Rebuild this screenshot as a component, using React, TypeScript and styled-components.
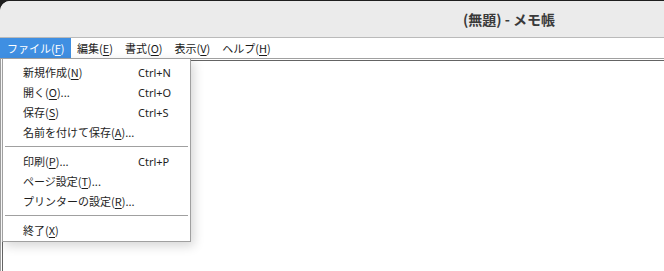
import React from "react";
import styled, { createGlobalStyle } from "styled-components";

const Global = createGlobalStyle`
  html, body { margin: 0; padding: 0; background: #1e1e1e; }
  body { width: 664px; height: 271px; overflow: hidden; font-family: "Noto Sans CJK JP", "Noto Sans", sans-serif; }
  #root { height: 100%; }
`;

const Window = styled.div`
  margin-top: 1px;
  height: 270px;
  background: #ffffff;
  border-top-left-radius: 10px;
  display: flex;
  flex-direction: column;
  overflow: hidden;
  position: relative;
`;

const TitleBar = styled.div`
  height: 36px;
  flex: none;
  background: #ebebeb;
  border-bottom: 1px solid #bababa;
  display: flex;
  align-items: center;
  padding-left: 463px;
  font-size: 14px;
  font-weight: 700;
  color: #3a3a3a;
  white-space: nowrap;
`;

const MenuBar = styled.div`
  height: 20px;
  flex: none;
  display: flex;
  background: #ffffff;
`;

const MenuTitle = styled.div<{ $active?: boolean }>`
  height: 20px;
  padding: 0 6px;
  display: flex;
  align-items: center;
  font-size: 11px;
  color: ${(p) => (p.$active ? "#ffffff" : "#1a1a1a")};
  background: ${(p) => (p.$active ? "#3f8fe2" : "transparent")};
  white-space: nowrap;
  &:first-child {
    padding: 0 6.5px 0 7px;
  }
`;

const Key = styled.span`
  text-decoration: underline;
  text-underline-offset: 2px;
`;

const EditArea = styled.div`
  flex: 1;
  border-top: 1px solid #a0a0a0;
  border-left: 1px solid #a0a0a0;
  padding: 1px 0 0 1px;
  display: flex;
`;

const EditInner = styled.div`
  flex: 1;
  background: #ffffff;
  border-top: 1px solid #646464;
  border-left: 1px solid #646464;
`;

const Dropdown = styled.div`
  position: absolute;
  left: 2px;
  top: 57px;
  width: 187px;
  background: #ffffff;
  border: 1px solid #a0a0a0;
  padding: 3px 0 1px;
  box-shadow: 3px 4px 10px rgba(0, 0, 0, 0.16);
  display: flex;
  flex-direction: column;
`;

const Item = styled.div`
  height: 20px;
  display: grid;
  grid-template-columns: 115px 1fr;
  align-items: center;
  padding-left: 20px;
  font-size: 11px;
  color: #1e1e1e;
  white-space: nowrap;
`;

const Shortcut = styled.span`
  font-family: "Noto Sans", "Noto Sans CJK JP", sans-serif;
  font-size: 11px;
`;

const Separator = styled.div`
  height: 9px;
  display: flex;
  align-items: center;
  padding: 0 2px;
  &::after {
    content: "";
    flex: 1;
    height: 1px;
    background: #a0a0a0;
  }
`;

type Entry =
  | { sep: true }
  | { sep?: false; label: string; key: string; tail?: string; shortcut?: string };

const entries: Entry[] = [
  { label: "新規作成", key: "N", shortcut: "Ctrl+N" },
  { label: "開く", key: "O", tail: "...", shortcut: "Ctrl+O" },
  { label: "保存", key: "S", shortcut: "Ctrl+S" },
  { label: "名前を付けて保存", key: "A", tail: "..." },
  { sep: true },
  { label: "印刷", key: "P", tail: "...", shortcut: "Ctrl+P" },
  { label: "ページ設定", key: "T", tail: "..." },
  { label: "プリンターの設定", key: "R", tail: "..." },
  { sep: true },
  { label: "終了", key: "X" },
];

const menus = [
  { label: "ファイル", key: "F" },
  { label: "編集", key: "E" },
  { label: "書式", key: "O" },
  { label: "表示", key: "V" },
  { label: "ヘルプ", key: "H" },
];

export default function App() {
  return (
    <>
      <Global />
      <Window>
        <TitleBar>(無題) - メモ帳</TitleBar>
        <MenuBar>
          {menus.map((m, i) => (
            <MenuTitle key={m.key} $active={i === 0}>
              {m.label}(<Key>{m.key}</Key>)
            </MenuTitle>
          ))}
        </MenuBar>
        <EditArea>
          <EditInner />
        </EditArea>
        <Dropdown>
          {entries.map((e, i) =>
            e.sep ? (
              <Separator key={i} />
            ) : (
              <Item key={i}>
                <span>
                  {e.label}(<Key>{e.key}</Key>){e.tail ?? ""}
                </span>
                <Shortcut>{e.shortcut ?? ""}</Shortcut>
              </Item>
            )
          )}
        </Dropdown>
      </Window>
    </>
  );
}
